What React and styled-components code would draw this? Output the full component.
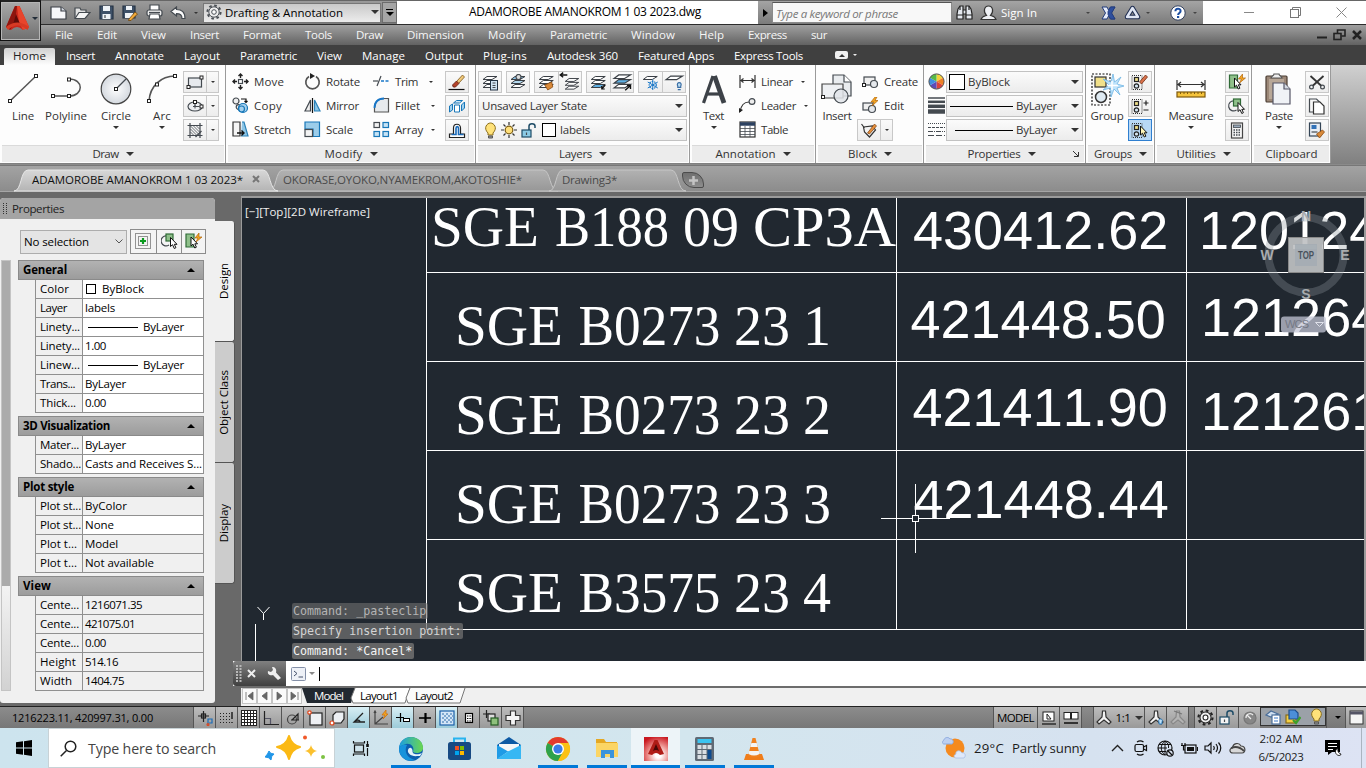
import React, { useLayoutEffect, useRef, useState } from "react";
import styled, { createGlobalStyle, css } from "styled-components";

const UI = '"Open Sans", "Noto Sans", sans-serif';

const Global = createGlobalStyle`
  * { box-sizing: border-box; }
  html, body { margin: 0; padding: 0; overflow: hidden; }
  body { font-family: ${UI}; font-size: 11.5px; color: #333; background: #696969; }
  svg { display: block; flex: none; }
`;

/* ---------- text fitted to a column width ---------- */
const FitSpan = styled.span`
  display: inline-block;
  flex: none;
  white-space: nowrap;
  width: ${(p) => p.$w}px;
`;

function Fit({ w, children }) {
  const ref = useRef(null);
  const [spacing, setSpacing] = useState(0);
  useLayoutEffect(() => {
    const range = document.createRange();
    range.selectNodeContents(ref.current);
    const natural = range.getBoundingClientRect().width;
    setSpacing((w - natural) / ref.current.textContent.length);
  }, [w, children]);
  return (
    <FitSpan ref={ref} $w={w} style={{ letterSpacing: spacing }}>
      {children}
    </FitSpan>
  );
}

/* ---------- shared parts ---------- */
const Screen = styled.div`
  width: 1366px;
  height: 768px;
  display: flex;
  flex-direction: column;
  overflow: hidden;
  background: #696969;
`;

const Slot = styled.div`
  flex: none;
  width: ${(p) => p.$w}px;
  height: 100%;
  display: flex;
  align-items: center;
  justify-content: ${(p) => (p.$left ? "flex-start" : "center")};
`;

const Caret = styled.i`
  flex: none;
  width: 0;
  height: 0;
  margin-left: ${(p) => p.$ml || 0}px;
  border: ${(p) => p.$s || 3}px solid transparent;
  border-top-color: ${(p) => p.$c || "#333"};
  border-bottom-width: 0;
`;

const Svg = ({ w = 16, h = w, vb, children }) => (
  <svg width={w} height={h} viewBox={vb || `0 0 ${w} ${h}`} fill="none" stroke="#444a50" strokeWidth="1.2">
    {children}
  </svg>
);

/* ---------- title area ---------- */
const Header = styled.header`
  flex: none;
  display: flex;
  height: 45px;
  position: relative;
`;
const AppButton = styled.div`
  position: absolute;
  left: 0;
  top: 0;
  width: 41px;
  height: 41px;
  border: 1px solid #111;
  border-top: 2px solid #222;
  box-shadow: inset 0 0 0 1px #b5b5b5;
  background: linear-gradient(#a8a8a8, #6f6f6f);
  display: flex;
  align-items: center;
  padding: 0 0 5px 4px;
  gap: 2px;
`;
const HeaderRows = styled.div`
  width: 1366px;
  display: flex;
  flex-direction: column;
`;
const TitleBar = styled.div`
  height: 25px;
  display: flex;
  border-top: 1px solid #666;
  border-bottom: 1px solid #2c2c2c;
  background: #fff;
`;
const QuickBar = styled.div`
  flex: none;
  width: 397px;
  padding-left: 46px;
  display: flex;
  align-items: center;
  background: linear-gradient(#9a9a9a, #7a7a7a);
`;
const Workspace = styled.div`
  width: 179px;
  height: 20px;
  border: 1px solid #777;
  background: linear-gradient(#c9c9c9, #ececec);
  display: flex;
  align-items: center;
  padding: 0 1px 1px 2px;
  gap: 3px;
  color: #000;
`;
const Push = styled.div`
  flex: 1;
`;
const QuickMore = styled.div`
  width: 15px;
  height: 21px;
  margin-left: 1px;
  border: 1px solid #6c6c6c;
  background: #a5a5a5;
  display: flex;
  flex-direction: column;
  align-items: center;
  justify-content: center;
  gap: 2px;
  &::before { content: ""; width: 7px; height: 1px; background: #000; }
`;
const FileTitle = styled.div`
  flex: none;
  width: 361px;
  padding-left: 72px;
  font-size: 12px;
  color: #000;
  line-height: 22px;
`;
const InfoCenter = styled.div`
  flex: none;
  width: 445px;
  display: flex;
  align-items: center;
  background: linear-gradient(#a4a4a4, #7b7b7b);
  color: #fff;
`;
const SearchField = styled.div`
  flex: none;
  width: 180px;
  height: 21px;
  border: 1px solid #8a8a8a;
  border-top-color: #555;
  background: #f8f8f8;
  font-style: italic;
  color: #777;
  line-height: 22px;
  padding-left: 3px;
`;
const PlayMark = styled.i`
  border: 4px solid transparent;
  border-left: 5px solid #000;
  border-right: 0;
`;
const WindowButtons = styled.div`
  flex: none;
  width: 163px;
  display: flex;
  align-items: center;
`;
const MenuBar = styled.nav`
  height: 20px;
  display: flex;
  align-items: center;
  gap: 24px;
  padding: 0 4px 1px 55px;
  color: #f6f6f6;
  background: linear-gradient(#a0a0a0, #626262);
`;
const MdiButtons = styled.div`
  display: flex;
  align-items: center;
  gap: 6px;
`;

/* ---------- ribbon ---------- */
const RibbonTabs = styled.div`
  flex: none;
  height: 20px;
  display: flex;
  align-items: center;
  gap: 20px;
  padding-left: 4px;
  color: #fff;
  background: #404040;
`;
const HomeTab = styled.div`
  width: 51px;
  height: 17px;
  margin: 3px -9px 0 0;
  padding-left: 9px;
  line-height: 16px;
  color: #222;
  border-radius: 2px 2px 0 0;
  background: linear-gradient(#d0d0d0, #fdfdfd);
`;
const TabToggle = styled.div`
  display: flex;
  align-items: center;
  gap: 5px;
  margin-left: 12px;
`;
const TogglePill = styled.div`
  width: 13px;
  height: 8px;
  border-radius: 2px;
  background: #f0f0f0;
  display: flex;
  align-items: center;
  justify-content: center;
  &::before { content: ""; border: 3px solid transparent; border-bottom-color: #333; border-top: 0; }
`;
const Ribbon = styled.div`
  flex: none;
  height: 100px;
  display: flex;
  background: linear-gradient(#d0d0d0, #808080);
  border-bottom: 1px solid #8a8a8a;
`;
const Panel = styled.section`
  flex: none;
  width: ${(p) => p.$w}px;
  height: 98px;
  background: #fdfdfd;
  border-right: 1px solid #9a9a9a;
  display: flex;
  flex-direction: column;
`;
const PanelBody = styled.div`
  height: 80px;
  padding: 5px 0 0 ${(p) => p.$pad || 0}px;
  display: flex;
`;
const PanelTitle = styled.div`
  height: 17px;
  margin: 0 1px 0 2px;
  background: #ececec;
  border-top: 1px solid #dadada;
  display: flex;
  align-items: center;
  justify-content: center;
  gap: 7px;
  padding-bottom: 1px;
`;
const Launcher = styled.div`
  width: 8px;
  margin: 0 3px 0 -11px;
`;
const BigButton = styled.div`
  flex: none;
  width: ${(p) => p.$w}px;
  height: 72px;
  display: flex;
  flex-direction: column;
  align-items: center;
`;
const BigIcon = styled.div`
  height: 38px;
  display: flex;
  align-items: center;
`;
const BigLabel = styled.div`
  height: 16px;
  line-height: 16px;
  margin-bottom: 2px;
`;
const Col = styled.div`
  flex: none;
  width: ${(p) => p.$w}px;
  margin-left: ${(p) => p.$ml || 0}px;
  display: flex;
  flex-direction: column;
`;
const Tool = styled.div`
  height: 24px;
  padding-bottom: 1px;
  display: flex;
  align-items: center;
  gap: 5px;
  > span { margin-top: -1px; }
`;
const ButtonRow = styled.div`
  height: 24px;
  padding-top: 1px;
  display: flex;
  gap: 4px;
`;
const Boxed = styled.div`
  flex: none;
  height: 22px;
  width: ${(p) => p.$w || 24}px;
  border: 1px solid ${(p) => (p.$on ? "#2f7fd0" : "#c8c8c8")};
  background: ${(p) => (p.$on ? "#b8d8f5" : "linear-gradient(#fafafa, #ededed)")};
  display: flex;
  align-items: center;
  > * { flex: 1; height: 100%; display: flex; align-items: center; justify-content: center; }
  > svg { flex: 1; height: 17px; }
  > svg + svg { border-left: 1px solid #c8c8c8; height: 20px; }
`;
const SplitArrow = styled.div`
  && { flex: none; width: 12px; border-left: 1px solid #c8c8c8; }
`;
const Combo = styled.div`
  width: ${(p) => p.$w}px;
  height: 22px;
  border: 1px solid #c2c2c2;
  background: linear-gradient(#fbfbfb, #ececec);
  display: flex;
  align-items: center;
  padding: 0 3px 0 ${(p) => (p.$pad == null ? 3 : p.$pad)}px;
  gap: ${(p) => p.$gap || 3}px;
  > span { margin-top: -2px; }
`;
const Swatch = styled.i`
  flex: none;
  width: ${(p) => p.$s}px;
  height: ${(p) => p.$s}px;
  background: #fff;
  border: 1px solid #000;
`;
const Rule = styled.i`
  flex: none;
  width: ${(p) => p.$w}px;
  height: 1px;
  background: #000;
`;
const Gap = styled.i`
  flex: none;
  width: ${(p) => p.$w}px;
`;

/* ---------- document tabs ---------- */
const DocBar = styled.div`
  flex: none;
  height: 27px;
  display: flex;
  padding: 3px 0 0 14px;
  border-top: 1px solid #777;
  border-bottom: 1px solid #a5a5a5;
  background: linear-gradient(#a3a3a3, #8c8c8c);
`;
const DocTab = styled.div`
  flex: none;
  position: relative;
  width: ${(p) => p.$w}px;
  height: 23px;
  margin-right: -9px;
  padding: 0 0 3px ${(p) => p.$pad}px;
  display: flex;
  align-items: center;
  gap: 9px;
  color: ${(p) => (p.$on ? "#111" : "#4a4a4a")};
  z-index: ${(p) => (p.$on ? 2 : 1)};
  > svg.shape { position: absolute; left: 0; top: 0; z-index: -1; }
`;
const NewTab = styled.div`
  width: 22px;
  height: 16px;
  margin: 3px 0 0 5px;
  position: relative;
  z-index: 3;
  border: 1px solid #4c4c4c;
  border-radius: 2px 12px 2px 12px;
  background: linear-gradient(#6f6f6f, #8d8d8d);
  display: flex;
  align-items: center;
  justify-content: center;
`;

/* ---------- work area ---------- */
const Work = styled.main`
  flex: none;
  height: 514px;
  display: flex;
`;
const Palette = styled.aside`
  flex: none;
  width: 215px;
  height: 505px;
  margin-top: 6px;
  border-radius: 4px 4px 3px 3px;
  background: #f0f0f0;
  overflow: hidden;
  color: #000;
`;
const PaletteTitle = styled.div`
  height: 21px;
  padding-left: 3px;
  display: flex;
  align-items: center;
  gap: 5px;
  color: #222;
  background: #a4a4a4;
`;
const PaletteTools = styled.div`
  height: 41px;
  padding: 10px 0 0 20px;
  display: flex;
  gap: 3px;
`;
const Selection = styled.div`
  width: 107px;
  height: 24px;
  margin-top: 1px;
  border: 1px solid #adadad;
  background: #e4e4e4;
  padding: 0 3px 1px;
  display: flex;
  align-items: center;
  justify-content: space-between;
`;
const PaletteButtons = styled.div`
  width: 76px;
  height: 25px;
  border: 1px solid #8c8c8c;
  background: #f4f4f4;
  display: grid;
  grid-template-columns: 25px 25px 24px;
  > * { display: flex; align-items: center; justify-content: center; }
  > * + * { border-left: 1px solid #8c8c8c; }
`;
const PaletteBody = styled.div`
  display: flex;
  gap: 7px;
  padding-left: 1px;
`;
const ScrollTrack = styled.div`
  width: 10px;
  height: 431px;
  border: 1px solid #c4c4c4;
  background: linear-gradient(#f4f4f4 75%, #d2d2d2);
  &::before { content: ""; display: block; width: 8px; height: 325px; background: #ababab; }
`;
const Groups = styled.div`
  width: 186px;
  display: flex;
  flex-direction: column;
  gap: 3px;
`;
const GroupHead = styled.div`
  height: 20px;
  border: 1px solid #8a8a8a;
  background: linear-gradient(#b2b2b2, #9c9c9c);
  font-weight: 700;
  padding: 0 8px 1px 4px;
  display: flex;
  align-items: center;
  justify-content: space-between;
  &::after { content: ""; border: 4px solid transparent; border-bottom-color: #000; border-top: 0; }
`;
const PropRow = styled.div`
  height: 19px;
  margin-left: 17px;
  display: grid;
  grid-template-columns: 46px 1fr;
  border: 1px solid #909090;
  border-top: 0;
  line-height: 18px;
`;
const PropName = styled.div`
  padding-left: 4px;
  white-space: nowrap;
`;
const PropValue = styled.div`
  border-left: 1px solid #909090;
  padding-left: 2px;
  display: flex;
  align-items: center;
  background: ${(p) => (p.$locked ? "#f0f0f0" : "#fff")};
`;
const SideTabs = styled.div`
  width: 20px;
  padding-top: 29px;
`;
const SideTab = styled.div`
  height: 121px;
  width: 20px;
  padding-right: 2px;
  border-right: 1px solid #555;
  border-bottom: 1px solid #555;
  border-radius: 0 3px 3px 0;
  background: ${(p) => (p.$on ? "#f0f0f0" : "#cccccc")};
  color: #000;
  display: flex;
  align-items: center;
  justify-content: center;
`;
const Vertical = styled.div`
  writing-mode: vertical-rl;
  transform: rotate(180deg);
  white-space: nowrap;
  letter-spacing: ${(p) => p.$ls || 0}px;
`;
const Stage = styled.div`
  flex: 1;
  padding: 4px 0 0 6px;
  display: flex;
  flex-direction: column;
`;
const Viewport = styled.div`
  height: 465px;
  border: 1px solid #9b9b9b;
  border-width: 2px 2px 0 1px;
  position: relative;
  overflow: hidden;
  background: #212830;
`;
const HistoryList = styled.div`
  position: absolute;
  left: 50px;
  bottom: 2px;
  display: flex;
  flex-direction: column;
  align-items: flex-start;
  gap: 4px;
  font: 11.67px/16px "DejaVu Sans Mono", monospace;
`;
const HistoryLine = styled.div`
  height: 16px;
  padding: 0 2px 0 1px;
  border-radius: 2px;
  color: ${(p) => p.$c};
  background: rgba(112, 112, 112, ${(p) => p.$a});
`;
const CommandBar = styled.div`
  height: 25px;
  margin-left: -8px;
  display: flex;
  position: relative;
  background: #fff;
`;
const CommandGrip = styled.div`
  width: 53px;
  padding-left: 3px;
  display: flex;
  align-items: center;
  gap: 5px;
  border-radius: 3px 0 0 3px;
  background: linear-gradient(#808080, #404040);
`;
const CommandInput = styled.div`
  display: flex;
  align-items: center;
  padding-left: 5px;
  gap: 3px;
  flex: 1;
`;
const Cursor = styled.i`
  width: 1px;
  height: 14px;
  margin-left: 1px;
  background: #000;
`;
const LayoutBar = styled.div`
  height: 20px;
  padding-left: 1px;
  border-top: 2px solid #6c6c6c;
  background: #f0f0f0;
  color: #000;
  display: flex;
`;
const NavButton = styled.div`
  width: 15px;
  height: 16px;
  border: 1px solid #c4c4c4;
  background: #fafafa;
  display: flex;
  align-items: center;
  justify-content: center;
`;
const LayoutTab = styled.div`
  position: relative;
  width: ${(p) => p.$w}px;
  height: 17px;
  padding-left: ${(p) => p.$pad}px;
  line-height: 16px;
  color: ${(p) => (p.$on ? "#fff" : "#000")};
  z-index: 0;
  > svg { position: absolute; left: 0; top: 0; z-index: -1; overflow: visible; }
`;

/* ---------- status bar ---------- */
const StatusBar = styled.div`
  flex: none;
  height: 22px;
  border-top: 1px solid #222;
  display: flex;
  color: #000;
  background: linear-gradient(#8c8c8c, #777);
`;
const Coordinates = styled.div`
  width: 193px;
  padding-left: 12px;
  line-height: 21px;
  font-size: 11px;
`;
const StatusButton = styled.div`
  flex: none;
  width: ${(p) => p.$w || 22}px;
  border-left: 1px solid #555;
  display: flex;
  align-items: center;
  justify-content: center;
  gap: 4px;
  background: ${(p) =>
    p.$on ? "linear-gradient(#d8eef4, #9ccbd9)" : p.$deep ? "linear-gradient(#8c8c8c, #777)" : "linear-gradient(#bdbdbd, #999)"};
  > span { margin-top: -1px; }
`;
const TrayBox = styled.div`
  width: 66px;
  height: 19px;
  border: 1px solid #333;
  display: flex;
  align-items: center;
  gap: 4px;
  padding-left: 4px;
  background: #9ba1a8;
`;

/* ---------- taskbar ---------- */
const Taskbar = styled.footer`
  flex: none;
  height: 40px;
  display: flex;
  color: #1c1c1c;
  background: linear-gradient(90deg, #cde4ee, #d3e6ee 50%, #d6e2f0 80%, #dde3f4);
`;
const SearchBox = styled.div`
  width: 287px;
  border: 1px solid #c8d2d6;
  background: #fff;
  display: flex;
  align-items: center;
  padding-left: 11px;
  gap: 11px;
  font-size: 14.2px;
  color: #444;
`;
const TaskItem = styled.div`
  flex: none;
  width: ${(p) => p.$w || 49}px;
  display: flex;
  align-items: center;
  justify-content: center;
  padding-top: 1px;
  ${(p) => p.$run && css`background: linear-gradient(#0078d7, #0078d7) 50% 100% / 40px 3px no-repeat;`}
  ${(p) => p.$on && css`background: linear-gradient(#0078d7, #0078d7) 0 100% / 100% 3px no-repeat, #edf4f8;`}
`;
const Weather = styled.div`
  display: flex;
  align-items: center;
  font-size: 13.2px;
  gap: 8px;
`;
const Clock = styled.div`
  width: 56px;
  display: flex;
  flex-direction: column;
  align-items: center;
  justify-content: center;
  line-height: 18px;
  padding-bottom: 1px;
`;
const PeekEdge = styled.i`
  width: 1px;
  margin-left: 9px;
  background: #aab4c0;
`;

/* ---------- icons ---------- */
const Sheet = ({ y, fill = "#fff", x = 0 }) => (
  <path d={`M${x + 1.5} ${y + 3.5} ${x + 5.5} ${y + 0.5}H${x + 15.5}L${x + 10.5} ${y + 3.5}Z`} fill={fill} stroke="#3b4046" strokeWidth="1" />
);
const Layers3 = ({ top, mid, bot }) => (
  <g>
    <Sheet y={10} fill={bot} />
    <Sheet y={6} fill={mid} />
    <Sheet y={2} fill={top} />
  </g>
);
const Pt = ({ x, y }) => <rect x={x - 1.5} y={y - 1.5} width="3" height="3" fill="#fff" stroke="#222" strokeWidth="1" />;
const PointerPath = ({ x = 0, y = 0, fill = "#fff" }) => (
  <path transform={`translate(${x} ${y})`} d="M0 0V9L2 7.2 3.8 11 5.4 10.2 3.8 6.8H6.5Z" fill={fill} stroke="#111" strokeWidth="1" />
);

const I = {
  logo: (
    <svg width="25" height="27" viewBox="0 0 25 27">
      <path d="M10 1H14.500L24 22 18 25Q12 19 6 25L1 22Z" fill="#c9271c" />
      <path d="M10 1H12L10 17 5 25 1 22Z" fill="#8d150e" />
      <path d="M12 1H14.500L24 22 18 25 14 17Z" fill="#e8452c" />
      <path d="M11 9 15 19Q12 17 8 20Z" fill="#5d0c08" />
      <path d="M1 22Q12 13 24 22L22.500 25Q12 16 3 25Z" fill="#d73a24" />
    </svg>
  ),
  newFile: <Svg w={17} h={14}><path d="M1 1H11L16 5V13H1Z" fill="#f6f7fa" stroke="#3a3f46" /><path d="M11 1V5H16" fill="#d0d5dd" stroke="#3a3f46" /></Svg>,
  open: <Svg w={17} h={14}><path d="M1 12V2H6L7 4H12V6" fill="#e2e2e2" /><path d="M1 12.500 5 6.500H16L11 12.500Z" fill="#f5f5f5" /></Svg>,
  save: <Svg w={15}><path d="M1 1H14V14H1Z" fill="#3e5168" stroke="#253344" /><path d="M4 1H11V6H4ZM3.500 9H11.500V14H3.500Z" fill="#eef2f6" stroke="none" /><path d="M6 10V13" /></Svg>,
  saveAs: <Svg w={16}><path d="M1 1H13V13H1Z" fill="#3e5168" stroke="#253344" /><path d="M4 1H10V5H4ZM3 8H11V13H3Z" fill="#eef2f6" stroke="none" /><path d="M7 14 13 7 15.500 9 9 15.500 6.500 15.500Z" fill="#f1a93a" stroke="#6b4510" strokeWidth=".8" /></Svg>,
  print: <Svg w={17}><path d="M4 7V1H13V7" fill="#fff" /><rect x="1" y="6" width="15" height="6" rx="2" fill="#eee" /><path d="M4 10H13L14 15H3Z" fill="#fff" /><path d="M3 8.500H14" /></Svg>,
  undo: <Svg w={16} h={14}><path d="M1 5.500 6.500 1V3.500C12 3.500 15 6 15 12.500H12C12 9 10 7.700 6.500 7.700V10Z" fill="#fbfbfb" /></Svg>,
  gear: (c = "#4a4f55", s = 16) => (
    <svg width={s} height={s} viewBox="0 0 16 16" fill="none" stroke={c}>
      <circle cx="8" cy="8" r="6.600" strokeWidth="2" strokeDasharray="2.600 2.580" />
      <circle cx="8" cy="8" r="5.200" fill="#eee" /><circle cx="8" cy="8" r="2.300" fill="#fff" />
    </svg>
  ),
  binoculars: <Svg w={17} h={16}><path d="M2 4 4 1H7V14H1V9ZM15 4 13 1H10V14H16V9ZM7 5H10V9H7Z" fill="#e4e8ee" stroke="#222" /><path d="M1 10H7M10 10H16M4 1V5M13 1V5" stroke="#222" /></Svg>,
  user: <Svg w={17} h={16}><path d="M1 14.500C2 11 5 11 6.500 10.500 3 7 4 1 8.500 1S14 7 10.500 10.500C12 11 15 11 16 14.500Z" fill="#eef0f4" stroke="#333" /></Svg>,
  exchange: <Svg w={15} h={14}><path d="M14 1H9.500L7.500 4 6 1H1L4.500 7 1 13H6L7.500 10 9.500 13H14L10.500 7Z" fill="#e6ecfa" stroke="#213a7a" strokeWidth="1" /><path d="M9.500 1H14L10.500 7 14 13H9.500L7 8.500V5.500Z" fill="#2e4f9e" stroke="#213a7a" strokeWidth=".8" /></Svg>,
  a360: <Svg w={17} h={15}><path d="M8.500 3 14 12H3Z" fill="none" stroke="#1f2d50" strokeWidth="4.500" strokeLinejoin="round" /><path d="M8.500 3 14 12H3Z" stroke="#dfe6f4" strokeWidth="2.400" strokeLinejoin="round" /></Svg>,
  help: (
    <svg width="16" height="16" viewBox="0 0 16 16"><circle cx="8" cy="8" r="7.200" fill="#fff" stroke="#33415f" /><path d="M5.400 6.200C5.400 3 10.600 3 10.600 6 10.600 8 8.100 8 8.100 10" fill="none" stroke="#1d4fa3" strokeWidth="2" /><rect x="7" y="11" width="2.200" height="2" fill="#1d4fa3" /></svg>
  ),
  line: <Svg w={30} h={30}><path d="M2 27 28 2" stroke="#555" strokeWidth="1.500" /><Pt x={2} y={27} /><Pt x={28} y={2} /></Svg>,
  polyline: <Svg w={32} h={24}><path d="M3 19H19C34 19 34 2 19 2" stroke="#555" strokeWidth="1.500" /><Pt x={3} y={19} /><Pt x={19} y={19} /><Pt x={19} y={2.500} /></Svg>,
  circle: (
    <Svg w={32} h={32}><defs><radialGradient id="disc"><stop offset="0" stopColor="#fff" /><stop offset="1" stopColor="#d4d9df" /></radialGradient></defs><circle cx="16" cy="16" r="14.800" fill="url(#disc)" stroke="#444" /><path d="M16 16 26 6" /><Pt x={16} y={16} /></Svg>
  ),
  arc: <Svg w={32} h={30}><path d="M3 27C4 12 15 2 29 2" stroke="#555" strokeWidth="1.600" /><Pt x={3} y={27} /><Pt x={11} y={10.500} /><Pt x={29} y={2} /></Svg>,
  rect: <Svg w={17}><rect x="2" y="4" width="13" height="9" fill="#e7eaee" /><Pt x={2} y={13} /><Pt x={15} y={3.500} /></Svg>,
  ellipse: <Svg w={17}><ellipse cx="8.500" cy="8.500" rx="7" ry="4.500" fill="#eceef1" /><path d="M8.500 4V8.500H13M6.500 8.500H10.500M8.500 6.500V10.500" strokeWidth="1" /><Pt x={8.500} y={4} /><Pt x={15} y={8.500} /></Svg>,
  hatch: <Svg w={17}><path d="M1 3.500H16M1 13.500H16M3.500 1V16M13.500 1V16" /><path d="M4 7 10 13M4 4 13 13M7 4 13 10M10 4 13 7M4 10 7 13" strokeWidth=".8" /><path d="M9 15 15 9" /></Svg>,
  move: <Svg w={17}><path d="M8.500 1V5M8.500 12V16M1 8.500H5M12 8.500H16M6.500 3 8.500 1 10.500 3M6.500 14 8.500 16 10.500 14M3 6.500 1 8.500 3 10.500M14 6.500 16 8.500 14 10.500" stroke="#222" strokeWidth="1.400" /><rect x="6.500" y="6.500" width="4" height="4" fill="#fff" /></Svg>,
  copy: <Svg w={17}><circle cx="4" cy="4" r="3" fill="#eee" /><circle cx="6.500" cy="10" r="2.300" fill="#eee" /><circle cx="11" cy="11" r="4.500" fill="#a5d1ee" stroke="#1877b8" /><circle cx="9.500" cy="12" r="3" stroke="#1877b8" /><path d="M9 2H14V5M12.500 4 14 5.500 15.500 4" stroke="#111" /></Svg>,
  stretch: <Svg w={17}><path d="M1 1H8V15H1Z" fill="#f5f5f5" stroke="#333" /><path d="M10 1H12L16 15H9" fill="#8fc6e6" stroke="#2b82b8" /><path d="M5 12H12M9.500 9.500 12 12 9.500 14.500" stroke="#111" strokeWidth="1.400" /></Svg>,
  rotate: <Svg w={17}><path d="M12 3.500A6.700 6.700 0 1 1 5 3.500" stroke="#555" strokeWidth="1.700" /><path d="M6 0 11 3 6 6Z" fill="#222" stroke="none" /></Svg>,
  mirror: <Svg w={17}><path d="M6.500 3V14H1Z" fill="#eee" /><path d="M10.500 3V14H16Z" fill="#8fc6e6" stroke="#2b82b8" /><path d="M8.500 1V16" stroke="#111" /></Svg>,
  scale: <Svg w={17}><path d="M1 1H15.500V15.500H9V8H1Z" fill="#9ccdea" stroke="#1877b8" /><rect x="1" y="8.500" width="7.500" height="7" fill="#f3f3f3" /></Svg>,
  trim: <Svg w={17}><path d="M0 8H5" /><path d="M4 13 8 3" /><path d="M8 8H17" stroke="#1877c8" strokeDasharray="3 1.500" strokeWidth="1.500" /></Svg>,
  fillet: <Svg w={17}><path d="M1.500 15V11C1.500 5 5 1.500 11 1.500H15.500V15Z" fill="#e7eaed" stroke="#555" /><path d="M1.500 11C1.500 5 5 1.500 11 1.500" stroke="#1877c8" strokeWidth="1.800" /></Svg>,
  array: <Svg w={17}><rect x="1" y="1.500" width="5.500" height="5" fill="#f2f2f2" /><g fill="#c8e4f6" stroke="#1877b8"><rect x="10" y="1.500" width="5.500" height="5" /><rect x="1" y="10.500" width="5.500" height="5" /><rect x="10" y="10.500" width="5.500" height="5" /></g></Svg>,
  erase: <Svg w={17}><path d="M0 15.500H16" stroke="#111" /><path d="M8 7.500 14 1 16 3 10 9.500Z" fill="#f0c97a" stroke="#7a5418" strokeWidth=".8" /><path d="M4 11 8 7 10.500 9.500 7 13Q4 14 4 11Z" fill="#b5432a" stroke="#5e1f12" strokeWidth=".8" /></Svg>,
  explode: <Svg w={17}><g stroke="#1877b8" strokeWidth="1"><path d="M6 7H11V14H6Z" fill="#fff" /><path d="M5 5 8 2.500H14L11 5Z" fill="#cbe6f7" /><path d="M13 7 16 4V10L13 13Z" fill="#9fd0ef" /><path d="M1 8 4 6V12L1 14Z" fill="#9fd0ef" /></g></Svg>,
  offset: <Svg w={17}><path d="M1 15.500H16V12H12V6C12 1 5 1 5 6V12H1Z" fill="#fff" stroke="#222" /><path d="M3 12.500H7.500V6.500C7.500 4 10 4 10 6.500V12.500H15" stroke="#1869b8" strokeWidth="1.600" /></Svg>,
  lay1: <Svg w={17}><Layers3 /><rect x="9" y="6.500" width="7" height="9.500" fill="#cfe4f4" stroke="#234" strokeWidth="1" /><path d="M11 9H14M11 11.500H14M11 13.500H14" strokeWidth="1" /></Svg>,
  lay2: <Svg w={17}><Layers3 top="#8ec6ea" mid="#b5daf0" /><circle cx="9" cy="3" r="2.500" fill="#ddd" /></Svg>,
  lay3: <Svg w={17}><Layers3 /><path d="M7 11 14 8 15 13 10 16Z" fill="#d98a3a" stroke="#8c4b12" strokeWidth=".8" /></Svg>,
  lay4: <Svg w={17}><g transform="translate(3 3.500) scale(.82)"><Layers3 /></g><path d="M0 2.500H6M2.500.5 0 2.500 2.500 4.500" stroke="#111" /></Svg>,
  lay5: <Svg w={17}><Layers3 bot="#5fb0e4" /><path d="M15.500 11 12 15M12 12V15H15" stroke="#111" /></Svg>,
  lay6: <Svg w={17}><Layers3 mid="#5fb0e4" /><path d="M11 15.500 15.500 11.500M12.500 11.500H15.500V14.500" stroke="#111" /></Svg>,
  lay7: <Svg w={17}><Sheet y={2} /><g stroke="#1877c8"><circle cx="11" cy="11" r="3.500" strokeDasharray="1.500 1" /><path d="M11 5.500V16M6 8 16 14M6 14 16 8" strokeWidth="1" /></g></Svg>,
  lay8: <Svg w={17}><Sheet y={3} /><path d="M11.500 12C9.500 8 16 8 14 12V13H11.500ZM11.500 15H14" fill="#bcdcf2" stroke="#3b6fa5" strokeWidth="1" /></Svg>,
  bulb: <Svg w={13} h={17}><path d="M4 11C-1 6 3 1 6.500 1S14 6 9 11V13H4Z" fill="#ffe27a" stroke="#8a6d1a" strokeWidth="1" /><path d="M4.500 14H8.500V16H4.500Z" fill="#999" stroke="#555" strokeWidth="1" /></Svg>,
  sun: <Svg w={16}><path d="M8 0V3M8 13V16M0 8H3M13 8H16M2.500 2.500 4.500 4.500M11.500 11.500 13.500 13.500M13.500 2.500 11.500 4.500M4.500 11.500 2.500 13.500" stroke="#333" /><circle cx="8" cy="8" r="3.800" fill="#ffdf7a" stroke="#7a5c12" /></Svg>,
  unlock: (c = "#8ccbe6") => <Svg w={17}><rect x="1" y="8" width="9" height="7" fill={c} stroke="#1d4b66" /><path d="M8 8V4C8 1 14 1 14 4V6" stroke="#1d4b66" strokeWidth="1.500" /><path d="M5.500 10.500V13" /></Svg>,
  textA: <Svg w={28} h={30}><path d="M13 2 3.500 29" stroke="#3d4248" strokeWidth="3.200" /><path d="M14.500 2 24 29" stroke="#3d4248" strokeWidth="4.800" /><path d="M7 20H21" stroke="#3d4248" strokeWidth="3.200" /></Svg>,
  linear: <Svg w={17}><path d="M1 2V15M16 2V15M2 7.500H15M4.500 5.500 2 7.500 4.500 9.500M12.500 5.500 15 7.500 12.500 9.500" stroke="#333" /></Svg>,
  leader: <Svg w={17}><path d="M1 15C2 8 6 5 10 5" stroke="#333" /><path d="M0 11V16L4 13Z" fill="#222" stroke="none" /><circle cx="13" cy="4.500" r="2.900" fill="#eee" /></Svg>,
  table: <Svg w={17}><rect x="1" y="1" width="15" height="15" fill="#fff" stroke="#333" /><path d="M1 3H16" stroke="#2c4160" strokeWidth="3.500" /><path d="M1 7.500H16M1 10.500H16M1 13.500H16M6 5V16M11 5V16" strokeWidth=".8" /></Svg>,
  insert: <Svg w={32} h={30}><path d="M12 12V1H23L30 8V22H20" fill="#e9ecef" /><path d="M23 1V8H30" fill="#fff" /><path d="M1 10H22V24H1Z" fill="#eef0f3" stroke="#444" /><circle cx="20" cy="22" r="7" fill="#e0e4e9" fillOpacity=".85" /><Pt x={2} y={23} /></Svg>,
  create: <Svg w={17}><rect x="2" y="4" width="11" height="8" fill="#f0f0f0" /><circle cx="12" cy="11" r="3.500" fill="#e5e8ec" /><Pt x={2} y={12} /></Svg>,
  edit: <Svg w={17}><rect x="1" y="6" width="10" height="7" fill="#f0f0f0" /><circle cx="10" cy="12" r="3.500" fill="#e5e8ec" /><path d="M13 0 9 5H12L10 9 16 3.500H13L15 0Z" fill="#f5a623" stroke="#b0650b" strokeWidth=".7" /></Svg>,
  attr: <Svg w={17}><path d="M1 2 4 6M3 5 12 4 15 8 9 15 4 10Z" fill="#f2f2f2" stroke="#333" /><path d="M7 11 14 2 16 4 9 12Z" fill="#e78f3a" stroke="#7a3d0c" strokeWidth=".7" /></Svg>,
  wheel: (
    <svg width="17" height="17" viewBox="-8.500 -8.500 17 17"><g><path d="M0 0V-7.500A7.500 7.500 0 0 1 6.500-3.750Z" fill="#f4d23c" /><path d="M0 0 6.500-3.750A7.500 7.500 0 0 1 6.500 3.750Z" fill="#ee8127" /><path d="M0 0 6.500 3.750A7.500 7.500 0 0 1 0 7.500Z" fill="#d9433d" /><path d="M0 0V7.500A7.500 7.500 0 0 1-6.500 3.750Z" fill="#5c4bb8" /><path d="M0 0-6.500 3.750A7.500 7.500 0 0 1-6.500-3.750Z" fill="#3f8fe0" /><path d="M0 0-6.500-3.750A7.500 7.500 0 0 1 0-7.500Z" fill="#57b947" /></g><circle r="7.600" fill="none" stroke="#555" /></svg>
  ),
  weights: <Svg w={17}><path d="M0 1H17" strokeWidth="1.500" /><path d="M0 4.800H17" strokeWidth="2.500" /><path d="M0 9.300H17" strokeWidth="3.500" /><path d="M0 14.500H17" strokeWidth="4.500" /></Svg>,
  ltypes: <Svg w={17}><path d="M0 2.500H17" strokeDasharray="1 1" /><path d="M0 6.500H17" strokeDasharray="3 1" /><path d="M0 10.500H17" strokeDasharray="5 1 1 1" /><path d="M0 14.500H17" strokeDasharray="6 2" /></Svg>,
  group: <Svg w={33} h={33}><rect x="1" y="1" width="18" height="31" stroke="#111" strokeDasharray="2 1.500" fill="#fbfbfb" /><rect x="4" y="4" width="11" height="10" fill="#f1e08a" stroke="#333" /><circle cx="10" cy="24" r="5.500" fill="#dfeaf2" stroke="#333" strokeWidth="1.500" /><path d="M22 1 23.500 9 30 4 26 11 33 13 26 15 29 22 23 16 20 24 19.500 15 12 17 18 12 12 6 20 9Z" fill="#bfe3fb" stroke="#6fb5e3" strokeWidth=".8" /><path d="M21 8V17M17 12.500H27" stroke="#fff" strokeWidth="1.500" /></Svg>,
  dots: (extra) => (
    <Svg w={17}><rect x=".5" y="1.500" width="10" height="14" stroke="#333" strokeWidth="1" strokeDasharray="1 1" /><rect x="3" y="3.500" width="4" height="4" fill="#f1e08a" stroke="#222" /><circle cx="5" cy="12" r="2.200" fill="#d5e6f2" stroke="#222" />{extra}</Svg>
  ),
  measure: <Svg w={30} h={18}><path d="M1 0V10M29 0V10M2 4.500H28M5 2 2 4.500 5 7M25 2 28 4.500 25 7" stroke="#333" /><rect x="1" y="12" width="28" height="5" fill="#f5c33b" stroke="#7f5a0d" /><path d="M4.500 12V14M8 12V14M11.500 12V14M15 12V14M18.500 12V14M22 12V14M25.500 12V14" stroke="#7f5a0d" strokeWidth="1" /></Svg>,
  quickSel: <Svg w={17}><path d="M1 1H9V14H1Z" fill="#8fc08a" stroke="#2f6a36" /><path d="M14 0 10 5H13L11 9 17 4H14Z" fill="#f5a623" stroke="#b0650b" strokeWidth=".7" /><PointerPath x={6} y={4} /></Svg>,
  selObj: <Svg w={17}><path d="M6 3A5 5 0 1 0 8 12" /><rect x="5" y="1" width="7" height="7" fill="#8fc08a" stroke="#2f6a36" /><PointerPath x={9.500} y={4.500} /></Svg>,
  selAdd: <Svg w={17}><rect x=".5" y=".5" width="15" height="15" stroke="#333" strokeDasharray="1 1" strokeWidth="1" /><rect x="3.500" y="3.500" width="9" height="9" stroke="#333" strokeDasharray="1 1" strokeWidth="1" /><path d="M8 5V11M5 8H11" stroke="#0a9a1e" strokeWidth="2.200" /></Svg>,
  calc: <Svg w={17}><rect x="3" y="1" width="11" height="15" fill="#f4f4f4" stroke="#444" /><rect x="5" y="3" width="7" height="2.500" fill="#9ab" strokeWidth=".8" /><path d="M5 8H12M5 10.500H12M5 13H12" strokeDasharray="1.500 1" strokeWidth="1.500" /></Svg>,
  paste: <Svg w={28} h={32}><rect x="1" y="3" width="21" height="26" rx="1" fill="#9c8878" stroke="#4b3d33" /><path d="M4 6H19V26H4Z" fill="#b8a797" stroke="none" /><path d="M6 5C6 3 9 3 9 1H14C14 3 17 3 17 5Z" fill="#eee" stroke="#555" /><path d="M8 10H19L25 16V31H8Z" fill="#f0f2f6" stroke="#556" /><path d="M19 10V16H25" fill="#d5dae2" stroke="#556" /></Svg>,
  cut: <Svg w={17}><path d="M2 2 13 12M15 2 4 12" stroke="#333" strokeWidth="1.800" /><circle cx="3" cy="13" r="1.900" /><circle cx="14" cy="13" r="1.900" /></Svg>,
  copyClip: <Svg w={17}><path d="M1 1H8L11 4V14H1Z" fill="#f7f7f7" /><path d="M5 4H11.500L15.500 8V16H5Z" fill="#fff" stroke="#333" /></Svg>,
  matchProp: <Svg w={17}><rect x="1" y="1" width="11" height="13" fill="#e8eef5" stroke="#345" /><rect x="3" y="3" width="5" height="4" fill="#3272b8" stroke="none" /><path d="M3 10H9" /><path d="M8 12 14 8 16 10 11 16Z" fill="#d98a3a" stroke="#8c4b12" strokeWidth=".8" /></Svg>,
};

/* ---------- ribbon building blocks ---------- */
const Big = ({ w, icon, label, lw, arrow }) => (
  <BigButton $w={w}>
    <BigIcon>{icon}</BigIcon>
    <BigLabel><Fit w={lw}>{label}</Fit></BigLabel>
    {arrow && <Caret />}
  </BigButton>
);
const Item = ({ icon, label, lw, arrow }) => (
  <Tool>
    {icon}
    <Fit w={lw}>{label}</Fit>
    {arrow != null && <Caret $ml={arrow} $s={2.5} />}
  </Tool>
);
const Split = ({ icon }) => (
  <ButtonRow><Boxed $w={36}>{icon}<SplitArrow><Caret $s={2.5} /></SplitArrow></Boxed></ButtonRow>
);
const Single = ({ icon, on }) => <ButtonRow><Boxed $on={on}>{icon}</Boxed></ButtonRow>;
const Title = ({ lw, children, arrow = true }) => (
  <PanelTitle><Fit w={lw}>{children}</Fit>{arrow && <Caret $s={4} />}</PanelTitle>
);

const MENUS = [["File", 18], ["Edit", 20], ["View", 25], ["Insert", 29], ["Format", 38], ["Tools", 27], ["Draw", 27], ["Dimension", 57], ["Modify", 38], ["Parametric", 57], ["Window", 44], ["Help", 25], ["Express", 39], ["sur", 16]];
const TABS = [["Insert", 29], ["Annotate", 49], ["Layout", 36], ["Parametric", 57], ["View", 25], ["Manage", 43], ["Output", 38], ["Plug-ins", 44], ["Autodesk 360", 71], ["Featured Apps", 76], ["Express Tools", 69]];

function TopArea() {
  return (
    <Header>
      <HeaderRows>
        <TitleBar>
          <QuickBar>
            <Slot $w={24}>{I.newFile}</Slot>
            <Slot $w={24}>{I.open}</Slot>
            <Slot $w={24}>{I.save}</Slot>
            <Slot $w={24}>{I.saveAs}</Slot>
            <Slot $w={25}>{I.print}</Slot>
            <Slot $w={22}>{I.undo}</Slot>
            <Slot $w={14}><Caret $s={2.5} /></Slot>
            <Workspace>{I.gear()}<Fit w={118}>Drafting &amp; Annotation</Fit><Push /><Caret $s={4} /></Workspace>
            <QuickMore><Caret $s={4} $c="#000" /></QuickMore>
          </QuickBar>
          <FileTitle><Fit w={232}>ADAMOROBE AMANOKROM 1 03 2023.dwg</Fit></FileTitle>
          <InfoCenter>
            <Slot $w={14}><PlayMark /></Slot>
            <SearchField><Fit w={122}>Type a keyword or phrase</Fit></SearchField>
            <Slot $w={24}>{I.binoculars}</Slot>
            <Slot $w={24}>{I.user}</Slot>
            <Slot $w={81} $left><Gap $w={1} /><Fit w={36}>Sign In</Fit></Slot>
            <Slot $w={14}><Caret $s={2.500} $c="#444" /></Slot>
            <Slot $w={26}>{I.exchange}</Slot>
            <Slot $w={22}>{I.a360}</Slot>
            <Slot $w={9}><Caret $s={2.500} $c="#444" /></Slot>
            <Slot $w={18} />
            <Slot $w={16}>{I.help}</Slot>
            <Slot $w={17}><Caret $s={2.500} $c="#444" /></Slot>
          </InfoCenter>
          <WindowButtons>
            <Slot $w={92}><svg width="10" height="11"><path d="M0 5.500H10" stroke="#888" /></svg></Slot>
            <Slot $w={0}><svg width="11" height="11" fill="#fff" stroke="#777"><path d="M2.500 2.500V.5H10.500V8.500H8.500" /><rect x=".5" y="2.500" width="8" height="8" /></svg></Slot>
            <Slot $w={92}><svg width="11" height="11" stroke="#888"><path d="M.5.5 10.500 10.500M10.500.5.5 10.500" /></svg></Slot>
          </WindowButtons>
        </TitleBar>
        <MenuBar>
          {MENUS.map(([t, w]) => <Fit key={t} w={w}>{t}</Fit>)}
          <Push />
          <MdiButtons>
            <svg width="10" height="11"><path d="M0 8.500H10" stroke="#222" strokeWidth="2" /></svg>
            <svg width="13" height="12" fill="none" stroke="#222"><path d="M4.500 4V1H12V7H8.500" strokeWidth="1.600" /><rect x="1" y="4.500" width="7" height="6" strokeWidth="1.600" /></svg>
            <svg width="10" height="10"><path d="M1 1 9 9M9 1 1 9" stroke="#222" strokeWidth="2.500" /></svg>
          </MdiButtons>
        </MenuBar>
      </HeaderRows>
      <AppButton>{I.logo}<Caret $s={3.500} $c="#222c38" /></AppButton>
    </Header>
  );
}

function RibbonArea() {
  return (
    <>
      <RibbonTabs>
        <HomeTab><Fit w={33}>Home</Fit></HomeTab>
        {TABS.map(([t, w]) => <Fit key={t} w={w}>{t}</Fit>)}
        <TabToggle><TogglePill /><Caret $s={2.500} $c="#eee" /></TabToggle>
      </RibbonTabs>
      <Ribbon>
        <Panel $w={226}>
          <PanelBody>
            <Big w={46} icon={I.line} label="Line" lw={22} />
            <Big w={40} icon={I.polyline} label="Polyline" lw={42} />
            <Big w={60} icon={I.circle} label="Circle" lw={30} arrow />
            <Big w={32} icon={I.arc} label="Arc" lw={18} arrow />
            <Col $w={36} $ml={5}><Split icon={I.rect} /><Split icon={I.ellipse} /><Split icon={I.hatch} /></Col>
          </PanelBody>
          <Title lw={26}>Draw</Title>
        </Panel>
        <Panel $w={250}>
          <PanelBody $pad={6}>
            <Col $w={72}>
              <Item icon={I.move} label="Move" lw={30} />
              <Item icon={I.copy} label="Copy" lw={28} />
              <Item icon={I.stretch} label="Stretch" lw={37} />
            </Col>
            <Col $w={69}>
              <Item icon={I.rotate} label="Rotate" lw={34} />
              <Item icon={I.mirror} label="Mirror" lw={33} />
              <Item icon={I.scale} label="Scale" lw={27} />
            </Col>
            <Col $w={72}>
              <Item icon={I.trim} label="Trim" lw={23} arrow={6} />
              <Item icon={I.fillet} label="Fillet" lw={25} arrow={6} />
              <Item icon={I.array} label="Array" lw={28} arrow={3} />
            </Col>
            <Col $w={24}><Single icon={I.erase} /><Single icon={I.explode} /><Single icon={I.offset} /></Col>
          </PanelBody>
          <Title lw={38}>Modify</Title>
        </Panel>
        <Panel $w={214}>
          <PanelBody $pad={2}>
            <Col $w={210}>
              <ButtonRow>
                <Boxed>{I.lay1}</Boxed><Boxed>{I.lay2}</Boxed>
                <Boxed $w={48}>{I.lay3}{I.lay4}</Boxed>
                <Boxed $w={48}>{I.lay5}{I.lay6}</Boxed>
                <Boxed $w={48}>{I.lay7}{I.lay8}</Boxed>
              </ButtonRow>
              <ButtonRow><Combo $w={209}><Fit w={105}>Unsaved Layer State</Fit><Push /><Caret $s={4} /></Combo></ButtonRow>
              <ButtonRow>
                <Combo $w={209} $pad={5} $gap={4}>{I.bulb}{I.sun}{I.unlock()}<Swatch $s={14} /><Fit w={30}>labels</Fit><Push /><Caret $s={4} /></Combo>
              </ButtonRow>
            </Col>
          </PanelBody>
          <Title lw={33}>Layers</Title>
        </Panel>
        <Panel $w={126}>
          <PanelBody $pad={3}>
            <Big w={41} icon={I.textA} label="Text" lw={21} arrow />
            <Col $w={76} $ml={5}>
              <Item icon={I.linear} label="Linear" lw={32} arrow={3} />
              <Item icon={I.leader} label="Leader" lw={35} arrow={3} />
              <Item icon={I.table} label="Table" lw={27} />
            </Col>
          </PanelBody>
          <Title lw={60}>Annotation</Title>
        </Panel>
        <Panel $w={108}>
          <PanelBody $pad={3}>
            <Big w={36} icon={I.insert} label="Insert" lw={29} />
            <Col $w={60} $ml={2}>
              <Tool><Gap $w={-1} />{I.create}<Fit w={34}>Create</Fit></Tool>
              <Tool><Gap $w={-1} />{I.edit}<Fit w={20}>Edit</Fit></Tool>
              <Split icon={I.attr} />
            </Col>
          </PanelBody>
          <Title lw={29}>Block</Title>
        </Panel>
        <Panel $w={162}>
          <PanelBody $pad={4}>
            <Col $w={18}><Tool>{I.wheel}</Tool><Tool>{I.weights}</Tool><Tool>{I.ltypes}</Tool></Col>
            <Col $w={138}>
              <ButtonRow><Combo $w={137} $pad={2}><Swatch $s={16} /><Fit w={42}>ByBlock</Fit><Push /><Caret $s={4} /></Combo></ButtonRow>
              <ButtonRow><Combo $w={137} $pad={3}><Rule $w={63} /><Fit w={41}>ByLayer</Fit><Push /><Caret $s={4} /></Combo></ButtonRow>
              <ButtonRow><Combo $w={137} $pad={8}><Rule $w={58} /><Fit w={41}>ByLayer</Fit><Push /><Caret $s={4} /></Combo></ButtonRow>
            </Col>
          </PanelBody>
          <PanelTitle>
            <Push /><Fit w={53}>Properties</Fit><Caret $s={4} /><Push />
            <Launcher><svg width="6" height="6" stroke="#333"><path d="M0 0 5 5M5.500 1V5.500H1" fill="none" /></svg></Launcher>
          </PanelTitle>
        </Panel>
        <Panel $w={69}>
          <PanelBody $pad={4}>
            <Big w={34} icon={I.group} label="Group" lw={33} />
            <Col $w={24} $ml={4}>
              <Single icon={I.dots(<path d="M8 8 14 1 16 3 10 10Z" fill="#d9714a" stroke="#6e2d14" strokeWidth=".8" />)} />
              <Single icon={I.dots(<path d="M12 5H17M14.500 2.500V7.500M12 12H17" stroke="#222" />)} />
              <Single on icon={I.dots(<PointerPath x={9} y={4} fill="#fff6b8" />)} />
            </Col>
          </PanelBody>
          <Title lw={38}>Groups</Title>
        </Panel>
        <Panel $w={97}>
          <PanelBody $pad={10}>
            <Big w={52} icon={I.measure} label="Measure" lw={45} arrow />
            <Col $w={24} $ml={8}><Single icon={I.quickSel} /><Single icon={I.selObj} /><Single icon={I.calc} /></Col>
          </PanelBody>
          <Title lw={39}>Utilities</Title>
        </Panel>
        <Panel $w={79}>
          <PanelBody $pad={9}>
            <Big w={36} icon={I.paste} label="Paste" lw={28} arrow />
            <Col $w={24} $ml={8}><Single icon={I.cut} /><Single icon={I.copyClip} /><Single icon={I.matchProp} /></Col>
          </PanelBody>
          <Title lw={52} arrow={false}>Clipboard</Title>
        </Panel>
      </Ribbon>
    </>
  );
}

const TabShape = ({ w, on }) => (
  <svg className="shape" width={w} height="23">
    <defs><linearGradient id={on ? "tabOn" : "tabOff"} x2="0" y2="1"><stop offset="0" stopColor={on ? "#d8d8d8" : "#b2b2b2"} /><stop offset="1" stopColor={on ? "#b4b4b4" : "#979797"} /></linearGradient></defs>
    <path d={`M0 22C8 22 6 1 14 1H${w - 15}C${w - 7} 1 ${w - 9} 22 ${w} 22Z`} fill={`url(#${on ? "tabOn" : "tabOff"})`} stroke={on ? "#e6e6e6" : "#c6c6c6"} />
  </svg>
);

function DocTabs() {
  return (
    <DocBar>
      <DocTab $w={264} $pad={18} $on><TabShape w={264} on /><Fit w={211}>ADAMOROBE AMANOKROM 1 03 2023*</Fit><svg width="8" height="8"><path d="M1 1 7 7M7 1 1 7" stroke="#777" strokeWidth="2" /></svg></DocTab>
      <DocTab $w={289} $pad={14}><TabShape w={289} /><Fit w={239}>OKORASE,OYOKO,NYAMEKROM,AKOTOSHIE*</Fit></DocTab>
      <DocTab $w={137} $pad={13}><TabShape w={137} /><Fit w={55}>Drawing3*</Fit></DocTab>
      <NewTab><svg width="9" height="9"><path d="M4.500 0V9M0 4.500H9" stroke="#c4c4c4" strokeWidth="2.500" /></svg></NewTab>
    </DocBar>
  );
}

const lineValue = (label) => <><Gap $w={3} /><Rule $w={50} /><Gap $w={5} /><Fit w={41}>{label}</Fit></>;
const PROPS = [
  ["General", 44, [
    ["Color", 29, <><Gap $w={1} /><Swatch $s={10} /><Gap $w={6} /><Fit w={42}>ByBlock</Fit></>],
    ["Layer", 27, <Fit w={30}>labels</Fit>],
    ["Linety...", 40, lineValue("ByLayer")],
    ["Linety...", 40, <Fit w={21}>1.00</Fit>],
    ["Linew...", 40, lineValue("ByLayer")],
    ["Trans...", 35, <Fit w={41}>ByLayer</Fit>],
    ["Thick...", 36, <Fit w={21}>0.00</Fit>],
  ]],
  ["3D Visualization", 87, [
    ["Mater...", 39, <Fit w={41}>ByLayer</Fit>],
    ["Shado...", 41, <Fit w={117}>Casts and Receives S...</Fit>],
  ]],
  ["Plot style", 51, [
    ["Plot st...", 41, <Fit w={42}>ByColor</Fit>, true],
    ["Plot st...", 41, <Fit w={29}>None</Fit>],
    ["Plot t...", 37, <Fit w={33}>Model</Fit>, true],
    ["Plot t...", 37, <Fit w={69}>Not available</Fit>, true],
  ]],
  ["View", 28, [
    ["Cente...", 39, <Fit w={57}>1216071.35</Fit>, true],
    ["Cente...", 39, <Fit w={50}>421075.01</Fit>, true],
    ["Cente...", 39, <Fit w={21}>0.00</Fit>, true],
    ["Height", 36, <Fit w={33}>514.16</Fit>, true],
    ["Width", 32, <Fit w={39}>1404.75</Fit>, true],
  ]],
];

function PropertyPalette() {
  return (
    <>
      <Palette>
        <PaletteTitle>
          <svg width="4" height="12" stroke="#333"><path d="M.5 0V12M3.500 0V12" strokeDasharray="1 1" /></svg>
          <Fit w={52}>Properties</Fit>
        </PaletteTitle>
        <PaletteTools>
          <Selection><Fit w={65}>No selection</Fit><svg width="8" height="5"><path d="M.5.5 4 4 7.500.5" fill="none" stroke="#555" /></svg></Selection>
          <PaletteButtons><div>{I.selAdd}</div><div>{I.selObj}</div><div>{I.quickSel}</div></PaletteButtons>
        </PaletteTools>
        <PaletteBody>
          <ScrollTrack />
          <Groups>
            {PROPS.map(([name, w, rows]) => (
              <div key={name}>
                <GroupHead><Fit w={w}>{name}</Fit></GroupHead>
                {rows.map(([label, lw, value, locked], i) => (
                  <PropRow key={i}><PropName><Fit w={lw}>{label}</Fit></PropName><PropValue $locked={locked}>{value}</PropValue></PropRow>
                ))}
              </div>
            ))}
          </Groups>
        </PaletteBody>
      </Palette>
      <SideTabs>
        <SideTab $on><Vertical $ls={-0.1}>Design</Vertical></SideTab>
        <SideTab><Vertical $ls={-0.05}>Object Class</Vertical></SideTab>
        <SideTab><Vertical $ls={-0.1}>Display</Vertical></SideTab>
      </SideTabs>
    </>
  );
}

/* each label: baseline, then its words with their left edge and set width */
const rowWords = (code, n) => [["SGE ", 455, 108], [`${code} `, 578.5, 142], ["23 ", 734, 56], [n, 803, 28]];
const LABELS = [
  [245.5, [["SGE ", 431, 108], ["B188 ", 555, 114], ["09 ", 683, 56], ["CP3A", 753, 143]]],
  [345, rowWords("B0273", "1")],
  [434, rowWords("B0273", "2")],
  [523, rowWords("B0273", "3")],
  [611.5, rowWords("B3575", "4")],
];
const NUMBERS = [["430412.62", 913, 249], ["421448.50", 910.5, 338], ["421411.90", 912.5, 426], ["421448.44", 913.5, 518], ["120124", 1199, 249], ["121264", 1201, 336], ["121261", 1201, 430]];

const CadNumber = styled.text`
  font-kerning: none;
`;

function Drawing() {
  return (
    <svg width="1122" height="463" viewBox="242 198 1122 463">
      <text x="245" y="216" fontFamily={UI} fontSize="11.500" fill="#f0f0f0" textLength="125">[−][Top][2D Wireframe]</text>
      <g stroke="#fff" strokeWidth="1" shapeRendering="crispEdges">
        <path d="M426.500 198V629.500M896.500 198V629.500M1186.500 198V629.500" />
        <path d="M426 272.500H1364M426 361.500H1364M426 450.500H1364M426 539.500H1364M426 629.500H1364" />
      </g>
      <g fill="#fff" fontFamily='"Liberation Serif", serif' fontSize="57">
        {LABELS.map(([y, words]) => (
          <text key={y} y={y}>
            {words.map(([t, x, w]) => <tspan key={t} x={x} textLength={w} lengthAdjust="spacingAndGlyphs">{t.trim()}</tspan>)}
          </text>
        ))}
      </g>
      <g fill="#fff" fontFamily='"Liberation Sans", sans-serif' fontSize="54">
        {NUMBERS.map(([t, x, y]) => <CadNumber key={t} x={x} y={y}>{t}</CadNumber>)}
      </g>
      <g stroke="#fff" fill="none" shapeRendering="crispEdges">
        <path d="M881 518.500H912M919 518.500H950M915.500 484V515M915.500 522V553" />
        <rect x="912.500" y="515.500" width="6" height="6" />
        <path d="M255.500 624V661" />
      </g>
      <path d="M257.500 607 263.500 613.500 269.500 607M263.500 613.500V620" stroke="#fff" fill="none" />
      <circle cx="1306" cy="255" r="37.500" fill="none" stroke="#8c949c" strokeOpacity=".33" strokeWidth="8" />
      <rect x="1288.500" y="237.500" width="35" height="35" fill="#bfc1c3" fillOpacity=".92" stroke="#8a8a8a" />
      <rect x="1295" y="244" width="22" height="22" fill="#a3abb3" fillOpacity=".8" />
      <text x="1298" y="259" fontFamily='"Liberation Sans", sans-serif' fontWeight="700" fontSize="10" fill="#48525c" textLength="16" lengthAdjust="spacingAndGlyphs">TOP</text>
      <g fontFamily='"Liberation Sans", sans-serif' fontWeight="700" fontSize="14" fill="#a9acaf" textAnchor="middle">
        <text x="1306" y="221">N</text><text x="1306" y="299">S</text><text x="1267" y="260">W</text><text x="1345" y="260">E</text>
      </g>
      <rect x="1281" y="316.500" width="45" height="16" rx="3" fill="#c3c5d6" fillOpacity=".75" />
      <text x="1285" y="328" fontFamily='"Liberation Sans", sans-serif' fontSize="11" fill="#747884" textLength="24">WCS</text>
      <path d="M1315.500 322.500H1323.500L1319.500 326.500Z" fill="none" stroke="#dfe1ea" />
    </svg>
  );
}

const NAV = ["M2 1V9M9 1 4 5 9 9Z", "M8 1 3 5 8 9Z", "M3 1 8 5 3 9Z", "M9 1V9M2 1 7 5 2 9Z"];

function StageArea() {
  return (
    <Stage>
      <Viewport>
        <Drawing />
        <HistoryList>
          <HistoryLine $c="#b4b4b4" $a={0.6}>Command: _pasteclip</HistoryLine>
          <HistoryLine $c="#d4d4d4" $a={0.75}>Specify insertion point:</HistoryLine>
          <HistoryLine $c="#f4f4f4" $a={0.85}>Command: *Cancel*</HistoryLine>
        </HistoryList>
      </Viewport>
      <CommandBar>
        <CommandGrip>
          <svg width="6" height="18" stroke="#b8b8b8"><path d="M1 0V18M4.500 0V18" strokeWidth="2" strokeDasharray="2 1" /></svg>
          <svg width="9" height="9"><path d="M1 1 8 8M8 1 1 8" stroke="#eee" strokeWidth="2" /></svg>
          <Gap $w={1} />
          <svg width="15" height="15" viewBox="0 0 15 15"><path d="M5 1 6 4 4 6 1 5C0 9 4 10 6 9L11 14 14 12 9 6.500C10 3 8 1 5 1Z" fill="#eee" /></svg>
        </CommandGrip>
        <CommandInput>
          <svg width="15" height="14"><rect x=".5" y=".5" width="14" height="13" rx="1" fill="#eef1f7" stroke="#8490a8" /><path d="M3 4 6 6.500 3 9M7.500 10H12" fill="none" stroke="#44506a" /></svg>
          <Caret $s={3} $c="#888" />
          <Cursor />
        </CommandInput>
      </CommandBar>
      <LayoutBar>
        {NAV.map((d) => <NavButton key={d}><svg width="11" height="10" fill="#666" stroke="#666" strokeWidth=".8"><path d={d} /></svg></NavButton>)}
        <LayoutTab $w={49} $pad={12} $on><svg width="54" height="16"><path d="M0 0H54L49 15H5Z" fill="#212830" /></svg><Fit w={29}>Model</Fit></LayoutTab>
        <LayoutTab $w={55} $pad={9}><svg width="60" height="16"><path d="M4 0 0 10 2 15H54L59 0" fill="#fff" stroke="#777" /></svg><Fit w={38}>Layout1</Fit></LayoutTab>
        <LayoutTab $w={56} $pad={9}><svg width="60" height="16"><path d="M4 0 0 10 2 15H54L59 0" fill="#fafafa" stroke="#777" /></svg><Fit w={38}>Layout2</Fit></LayoutTab>
      </LayoutBar>
    </Stage>
  );
}

const K = "#222";
const STATUS = [
  [<><path d="M1 6H12M6.500 1V12" stroke={K} /><rect x="4.500" y="4" width="4" height="4" stroke={K} /><path d="M11 15V9H15V13H12" stroke="#1a6cb8" /><circle cx="11" cy="14.500" r="1" stroke="#e0461c" /></>],
  [<><path d="M1 3.500H11M1 6.500H11M1 9.500H11M1 12.500H11" stroke={K} strokeWidth="1" strokeDasharray="1 2" /><path d="M13 2V9M13 12V13" stroke={K} strokeWidth="1.500" /></>],
  [<><rect x=".5" y=".5" width="15" height="15" fill="#fff" stroke={K} strokeWidth="1" /><path d="M3.500 1V15M6.500 1V15M9.500 1V15M12.500 1V15M1 3.500H15M1 6.500H15M1 9.500H15M1 12.500H15" stroke={K} strokeWidth="1" /></>],
  [<><path d="M1.500 1V14.500H16" stroke={K} /><path d="M2 8.500H7.500V14" stroke="#556" /></>],
  [<><circle cx="7" cy="9.500" r="4.500" stroke="#444" /><path d="M6 10H14M7 10 13 4V10" stroke={K} strokeWidth="1.200" /></>],
  [<><rect x="3" y="3" width="12" height="12" fill="#eef0f4" stroke={K} /><circle cx="2.500" cy="2.500" r="1.700" fill="#fff" stroke="#e0461c" /></>],
  [<><path d="M4 5 7 2H15V9L12 13H4Z" fill="#eceff3" stroke={K} /><circle cx="3" cy="13" r="2" fill="#fff" stroke="#e0461c" /></>],
  [<path d="M12 3 3 12H14M4 11C8 9 9 11 9 12" stroke={K} strokeWidth="1.300" />, true],
  [<><path d="M2 1V14H15M2 14 10 7M1 3 2 1 3 3" stroke="#444" /><path d="M13 0 9 5H12L10 9 15 4H13Z" fill="#f5a623" stroke="#c86b0a" strokeWidth=".7" /></>],
  [<><path d="M1 7.500H9M5.500 3V12" stroke="#000" strokeWidth="1.200" /><rect x="8.500" y="8.500" width="6" height="3" fill="#fff" stroke="#000" strokeWidth="1" /></>, true],
  [<><path d="M2 8H14" stroke="#000" strokeWidth="1.600" /><path d="M8.500 3V13" stroke="#000" strokeWidth="2.200" /></>],
  [<><rect x="1" y="1" width="14" height="14" fill="#d4e6f7" stroke="#1a5fa8" /><path d="M3 4H14M3 8H14M3 12H14" stroke="#7fa8d0" strokeWidth="2" strokeDasharray="2 2" /><path d="M5 6H14M5 10H14" stroke="#7fa8d0" strokeWidth="2" strokeDasharray="2 2" /></>, true],
  [<><rect x="4.500" y="3.500" width="7" height="9" fill="#fff" stroke="#000" /><path d="M6 6H10.500M6 8.500H10.500M6 11H10.500" stroke="#000" strokeWidth="1" strokeDasharray="1 .6" /></>],
  [<><path d="M0 4H7M3.500 0V8" stroke={K} /><rect x="5" y="4" width="7" height="7" fill="#ddd" stroke={K} /><rect x="8" y="8" width="7" height="7" fill="#8ec07c" stroke="#245c24" /></>],
  [<path d="M5.500 1H10.500V5.500H15V10.500H10.500V15H5.500V10.500H1V5.500H5.500Z" fill="#f5f5f5" stroke="#333" />],
];
const ScaleMark = ({ c = "#f2f2f2", s = "#333" }) => <path d="M6.500 1H9.500L10 7 15 12 13 14 8 10 3 14 1 12 6 7Z" fill={c} stroke={s} />;

function Status() {
  return (
    <StatusBar>
      <Coordinates><Fit w={141}>1216223.11, 420997.31, 0.00</Fit></Coordinates>
      {STATUS.map(([icon, on], i) => <StatusButton key={i} $on={on}><Svg>{icon}</Svg></StatusButton>)}
      <StatusButton $w={470} $deep />
      <StatusButton $w={44}><Fit w={37}>MODEL</Fit></StatusButton>
      <StatusButton><Svg><rect x="2" y="2" width="11" height="9" fill="#fff" stroke="#222" strokeWidth="1" /><path d="M6 4V9H10Z" stroke="#222" strokeWidth="1" /><path d="M1 14H15" stroke="#333" strokeWidth="1.600" /></Svg></StatusButton>
      <StatusButton><Svg><rect x="1" y="2.500" width="6.500" height="6.500" fill="#fff" stroke="#222" strokeWidth="1" /><rect x="8.500" y="2.500" width="6.500" height="6.500" fill="#fff" stroke="#222" strokeWidth="1" /><path d="M1 13H15" stroke="#333" strokeWidth="2" /></Svg></StatusButton>
      <StatusButton $w={12} $deep />
      <StatusButton $w={51}><Svg><ScaleMark /></Svg><Fit w={15}>1:1</Fit><Caret $s={4} /></StatusButton>
      <StatusButton><Svg><ScaleMark /><path d="M11 12C9 8 16 8 14 12V14H11Z" fill="#bfe0f6" stroke="#2a78b8" strokeWidth="1" /></Svg></StatusButton>
      <StatusButton><Svg><ScaleMark c="#b4b4b4" s="#888" /><path d="M4 1 12 4" stroke="#777" /></Svg></StatusButton>
      <StatusButton $w={6} $deep />
      <StatusButton>{I.gear("#222", 17)}</StatusButton>
      <StatusButton>{I.unlock("#f4f4f4")}</StatusButton>
      <StatusButton><Svg><circle cx="8" cy="8" r="6" fill="#868686" stroke="#777" /><path d="M9 9 5 5M4 8A4 4 0 0 1 11 5" stroke="#eee" /></Svg></StatusButton>
      <TrayBox>
        <Svg><path d="M1 6 6 2 13 5 6 8Z" fill="#cfdff0" stroke="#4a6e9a" /><rect x="7" y="6" width="8" height="9" fill="#fff" stroke="#4a6e9a" /><path d="M9 9H13M9 12H13" stroke="#3a78c8" /></Svg>
        <Svg><rect x="1" y="6" width="10" height="8" fill="#f3cf45" stroke="#8a6d1a" /><path d="M4 1H10L13 4V10H4Z" fill="#4c8fd8" stroke="#1d4f8c" /><path d="M8 11 11 14 15.500 8" stroke="#3ba02c" strokeWidth="2.200" /></Svg>
        <Gap $w={1} />
        {I.bulb}
      </TrayBox>
      <StatusButton $w={19} $deep><Caret $s={3} $c="#000" $ml={3} /></StatusButton>
      <StatusButton $w={21}><Svg w={15}><rect x="1" y="1" width="13" height="13" fill="#f5f5f5" stroke="#333" strokeWidth="1" /><path d="M1 3H14" stroke="#556" strokeWidth="3" /></Svg></StatusButton>
    </StatusBar>
  );
}

const APPS = {
  view: <svg width="18" height="17" fill="none" stroke="#111" strokeWidth="1.200"><rect x="2.500" y="5" width="9" height="7" /><path d="M1.500 1V3H12.500V1M1.500 16V14H12.500V16M15.500 1V4M15.500 8V16" /><path d="M15.500 4V7" strokeWidth="2.600" /></svg>,
  edge: (
    <svg width="26" height="26" viewBox="0 0 26 26"><defs><linearGradient id="edgeA" x2="1"><stop stopColor="#1b9de2" /><stop offset="1" stopColor="#6bd84e" /></linearGradient></defs><circle cx="13" cy="13" r="12" fill="#0d5fae" /><path d="M1 12C2 4 8 1 13 1 20 1 25 6 25 12 25 17 18 18 15 16 17 10 12 7 8 8 4 9 1 11 1 14Z" fill="url(#edgeA)" /><path d="M1 13C2 9 6 8 9 9 6 14 8 22 17 24 8 27 1 20 1 13Z" fill="#1793dc" /><path d="M10 14C9 17 13 21 20 20L22 20 24 17C20 19 14 19 14.500 14.500 14 11 11 11 10 14Z" fill="#e6f3f8" /></svg>
  ),
  store: <svg width="25" height="25" viewBox="0 0 25 25"><path d="M7 7V2.500H18V7" fill="none" stroke="#28b4ef" strokeWidth="2" /><rect x="1" y="6" width="23" height="18" rx="2.500" fill="#174a83" /><path d="M8 10H12V14H8Z" fill="#f25022" /><path d="M13 10H17V14H13Z" fill="#7fba00" /><path d="M8 15H12V19H8Z" fill="#00a4ef" /><path d="M13 15H17V19H13Z" fill="#ffb900" /></svg>,
  mail: <svg width="26" height="25" viewBox="0 0 26 25"><path d="M1 9 13 1 25 9V14H1Z" fill="#0c59a4" /><path d="M3 8H23V16L13 20 3 16Z" fill="#f4f6f8" /><path d="M1 9 13 16 1 23ZM1 23H25L13 15Z" fill="#1f9be6" /><path d="M25 9V23H1L13 15Z" fill="#36b7f4" /></svg>,
  chrome: <svg width="26" height="26" viewBox="0 0 26 26"><circle cx="13" cy="13" r="12" fill="#fbbc05" /><path d="M13 13 2.600 7A12 12 0 0 1 23.400 7H13Z" fill="#e33b2e" /><path d="M2.600 7A12 12 0 0 0 13 25L18.200 16 13 13Z" fill="#2ea24c" /><path d="M13 7H23.400A12 12 0 0 1 13 25L18.500 15Z" fill="#fbc116" /><circle cx="13" cy="13" r="6" fill="#fff" /><circle cx="13" cy="13" r="4.600" fill="#3a7de8" /></svg>,
  files: <svg width="24" height="22" viewBox="0 0 24 22"><path d="M1 1H9L11 4H22V19H1Z" fill="#e5a823" /><path d="M1 5H23V19H1Z" fill="#fbd565" /><path d="M6 20V12H19V20H15V16H10V20Z" fill="#3a94dc" /></svg>,
  cad: <svg width="24" height="24" viewBox="0 0 24 24"><defs><radialGradient id="cadBg" cx=".6" cy=".75" r=".8"><stop offset=".15" stopColor="#fff" /><stop offset=".55" stopColor="#ec8f8c" /><stop offset="1" stopColor="#c91820" /></radialGradient></defs><rect width="24" height="24" fill="url(#cadBg)" /><path d="M10.500 3H13.500L20 17 16 18Q12 14 8 18L4 17Z" fill="#b01c16" /><path d="M12 7 15 14Q12 12 9 14Z" fill="#4a0806" /></svg>,
  calc: <svg width="19" height="24" viewBox="0 0 19 24"><rect width="19" height="24" rx="1.500" fill="#5f6a75" /><rect x="2.500" y="2" width="14" height="4" fill="#3cc4f0" /><g fill="#d9dee3"><path d="M2.500 8H6.500V12H2.500ZM7.500 8H11.500V12H7.500ZM12.500 8H16.500V12H12.500ZM2.500 13H6.500V17H2.500ZM7.500 13H11.500V17H7.500ZM2.500 18H6.500V22H2.500ZM7.500 18H11.500V22H7.500Z" /></g><path d="M12.500 13H16.500V22H12.500Z" fill="#0d4b8f" /></svg>,
  vlc: <svg width="22" height="24" viewBox="0 0 22 24"><path d="M3 17H19L21 23H1Z" fill="#ef7d1a" /><path d="M9.500 1H12.500L17 19Q11 22 5 19Z" fill="#f08220" /><path d="M8.400 6H13.700L14.800 10H7.300ZM6.200 14H15.800L16.500 17Q11 20 5.500 17Z" fill="#f4f4f4" /></svg>,
};

function TaskbarArea() {
  return (
    <Taskbar>
      <Slot $w={48}><svg width="16" height="16" fill="#000"><path d="M0 2.300 7 1.300V7.500H0ZM8 1.200 16 0V7.500H8ZM0 8.500H7V14.700L0 13.700ZM8 8.500H16V16L8 14.800Z" /></svg></Slot>
      <SearchBox>
        <svg width="17" height="17" fill="none" stroke="#222" strokeWidth="1.500"><circle cx="10.500" cy="6.500" r="5.300" /><path d="M6.500 10.500.7 16.300" /></svg>
        <Fit w={128}>Type here to search</Fit>
        <Gap $w={27} />
        <svg width="61" height="26" viewBox="0 0 61 26"><path d="M24 1Q26.500 10 35 12 26.500 14 24 24 21.500 14 12 12 21.500 10 24 1Z" fill="#fbb915" stroke="#fbb915" strokeLinejoin="round" strokeWidth="2" /><path d="M46 10Q47 15 52 16 47 17 46 22 45 17 40 16 45 15 46 10Z" fill="#fbc02d" /><path d="M4 16Q5 19 9 19 6 21 6 25 4 22 0 22 3 19 4 16Z" fill="#2196e8" stroke="#2196e8" /><circle cx="40" cy="2.500" r="2" fill="#f0592a" /><circle cx="58" cy="22" r="2" fill="#7cc243" /></svg>
      </SearchBox>
      <TaskItem $w={51}>{APPS.view}</TaskItem>
      <TaskItem $run>{APPS.edge}</TaskItem>
      <TaskItem>{APPS.store}</TaskItem>
      <TaskItem>{APPS.mail}</TaskItem>
      <TaskItem $run>{APPS.chrome}</TaskItem>
      <TaskItem $run>{APPS.files}</TaskItem>
      <TaskItem $on>{APPS.cad}</TaskItem>
      <TaskItem $run>{APPS.calc}</TaskItem>
      <TaskItem $run>{APPS.vlc}</TaskItem>
      <Push />
      <Weather>
        <svg width="24" height="24" viewBox="0 0 24 24"><circle cx="13" cy="12" r="9.500" fill="#f58a1f" /><path d="M2 8H10C13 6 10 2 8 3 6 0 2 2 2 4 0 5 0 8 2 8Z" fill="#bcd0f2" stroke="#8facdf" /><path d="M14 22H22C25 19 22 16 20 17 18 13 13 15 14 18 11 19 12 22 14 22Z" fill="#dfe9fa" stroke="#a9bfe6" strokeWidth=".8" /></svg>
        <Fit w={30}>29°C</Fit>
        <Fit w={74}>Partly sunny</Fit>
      </Weather>
      <Slot $w={55}><Gap $w={7} /><svg width="13" height="8"><path d="M1 7 6.500 1.500 12 7" fill="none" stroke="#222" strokeWidth="1.400" /></svg></Slot>
      <Slot $w={0}><Svg w={14} h={16}><rect x="1" y="4.500" width="8.500" height="7" rx="1.500" stroke="#111" /><path d="M9.500 7 12.500 5.500V10.500L9.500 9M3 2C5 .5 7.500.5 9.500 2M3 14C5 15.500 7.500 15.500 9.500 14" stroke="#111" /></Svg></Slot>
      <Slot $w={48}><Svg w={17}><circle cx="8" cy="8" r="7" stroke="#111" /><path d="M1 8H10M8 1V15M8 1C3 5 3 11 8 15M8 1C11 3 12 5 11.500 8M2 4.500H14M2 11.500H9" stroke="#111" strokeWidth="1" /><circle cx="13" cy="13" r="3.200" fill="#dbe4f2" stroke="#111" /><path d="M11 11 15 15" stroke="#111" /></Svg></Slot>
      <Slot $w={0}><Svg w={17} h={13}><rect x="4" y="3" width="11" height="8" stroke="#111" /><rect x="6" y="5" width="7" height="4" fill="#111" stroke="none" /><path d="M16.500 5V9M1 1V3M4 1V3M0 3.500H5M2.500 4V8H4" stroke="#111" /></Svg></Slot>
      <Slot $w={48}><Svg w={18} h={14}><path d="M1 5H4L7 2V12L4 9H1Z" stroke="#111" /><path d="M9.500 5Q11 7 9.500 9M12 3Q15 7 12 11M14.500 1.500Q19 7 14.500 12.500" stroke="#111" /></Svg></Slot>
      <Slot $w={0}><Svg w={17} h={12}><path d="M4 11C0 11 0 6 3.500 6 4 1 10 0 12 4 17 4 17 11 13 11Z" fill="#d8d8d8" stroke="#444" /><path d="M2 6Q9 3 15 9" stroke="#444" strokeWidth="1.800" /></Svg></Slot>
      <Slot $w={16} />
      <Clock><Fit w={43}>2:02 AM</Fit><Fit w={45}>6/5/2023</Fit></Clock>
      <Slot $w={5} />
      <Slot $w={38}><svg width="17" height="16" viewBox="0 0 17 16"><path d="M0 0H15V12H7L3 15V12H0Z" fill="#000" /><path d="M3 3.500H12M3 6.500H12M3 9.500H8" stroke="#fff" /><path d="M13 8C9 10 10 15 14 15.500Q16 15.500 16 14 12 13 13 8Z" fill="#fff" stroke="#000" strokeWidth=".8" /></svg></Slot>
      <PeekEdge />
      <Slot $w={4} />
    </Taskbar>
  );
}

export default function App() {
  return (
    <Screen>
      <Global />
      <TopArea />
      <RibbonArea />
      <DocTabs />
      <Work>
        <PropertyPalette />
        <StageArea />
      </Work>
      <Status />
      <TaskbarArea />
    </Screen>
  );
}
